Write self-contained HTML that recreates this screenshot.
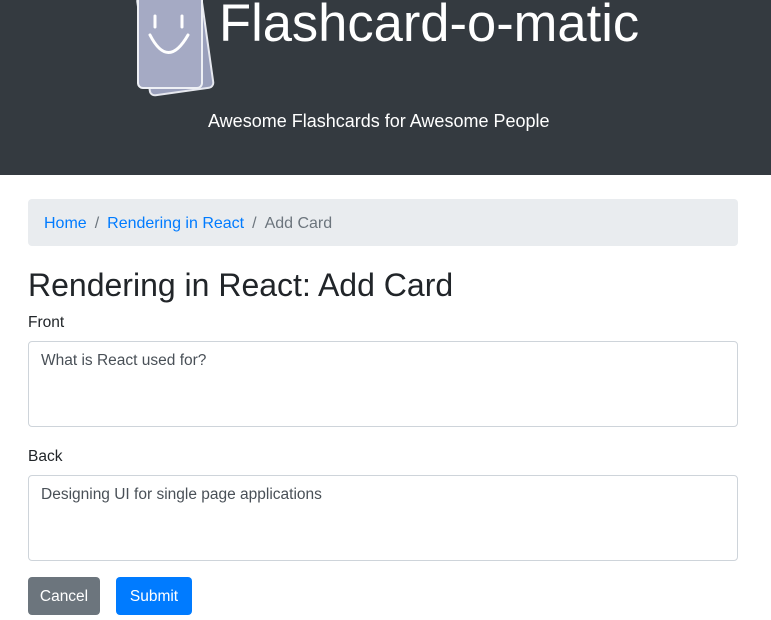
<!DOCTYPE html>
<html><head><meta charset="utf-8"><style>
body{margin:0;width:771px;height:620px;overflow:hidden;font-family:"Liberation Sans",sans-serif;color:#212529;background:#fff}
.hdr{position:absolute;left:0;top:0;width:771px;height:175px;background:#343a40;overflow:hidden}
.title{position:absolute;left:219px;top:-7px;font-size:52.5px;color:#fff;font-weight:300;white-space:nowrap}
.sub{position:absolute;left:208px;top:111px;font-size:18px;color:#fff;white-space:nowrap}
.bc{position:absolute;left:28px;top:199px;width:710px;height:47px;background:#e9ecef;border-radius:4px;font-size:16px;line-height:50px;box-sizing:border-box;padding-left:16px;color:#6c757d}
.bc a{color:#007bff;text-decoration:none}
.bc span.s{padding:0 8px}
h1{position:absolute;left:28px;top:265px;margin:0;font-size:32px;font-weight:400;line-height:40px}
.lbl{position:absolute;left:28px;font-size:15.5px}
.ta{position:absolute;left:28px;width:710px;height:86px;border:1px solid #ced4da;border-radius:4px;box-sizing:border-box;padding:10px 12px;font-size:15.5px;color:#495057}
.btn{position:absolute;top:577px;height:38px;border-radius:4px;color:#fff;font-size:15.5px;line-height:40px;text-align:center}
</style></head><body>
<div class="hdr">
<svg style="position:absolute;left:125px;top:-20px" width="100" height="120" viewBox="0 0 100 120">
<rect x="18" y="12" width="64" height="100" rx="5" fill="#9aa0bc" stroke="#e6e8ef" stroke-width="2" transform="rotate(-8 50 60)"/>
<rect x="13" y="6" width="64" height="102" rx="5" fill="#a5aac4" stroke="#eef0f5" stroke-width="2"/>
<line x1="30" y1="36" x2="30" y2="47" stroke="#fff" stroke-width="3" stroke-linecap="round"/>
<line x1="57" y1="36" x2="57" y2="47" stroke="#fff" stroke-width="3" stroke-linecap="round"/>
<path d="M25 55 Q43 90 63 55" fill="none" stroke="#fff" stroke-width="3" stroke-linecap="round"/>
</svg>
<div class="title">Flashcard-o-matic</div>
<div class="sub">Awesome Flashcards for Awesome People</div>
</div>
<div class="bc"><a>Home</a><span class="s">/</span><a>Rendering in React</a><span class="s">/</span>Add Card</div>
<h1>Rendering in React: Add Card</h1>
<div class="lbl" style="top:314px">Front</div>
<div class="ta" style="top:341px">What is React used for?</div>
<div class="lbl" style="top:448px">Back</div>
<div class="ta" style="top:475px">Designing UI for single page applications</div>
<div class="btn" style="left:28px;width:72px;background:#6c757d">Cancel</div>
<div class="btn" style="left:116px;width:76px;background:#007bff">Submit</div>
</body></html>
